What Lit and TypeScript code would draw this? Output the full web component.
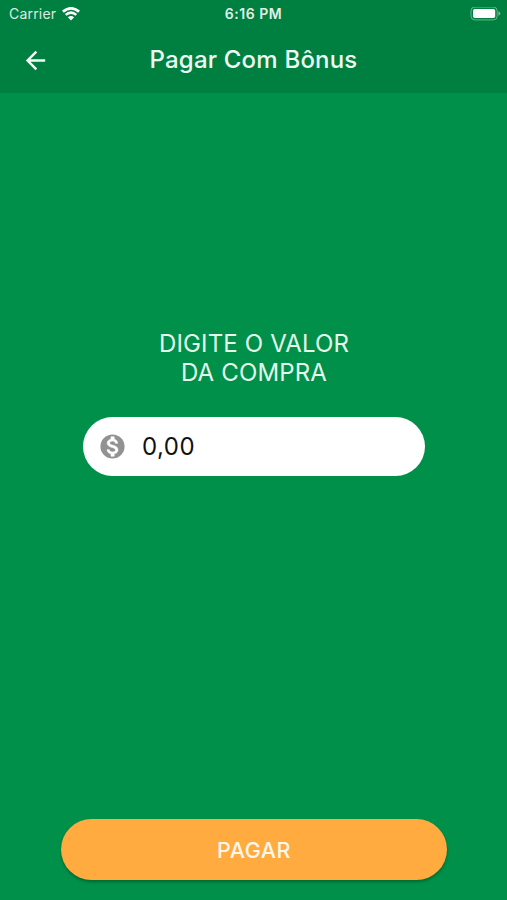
import { LitElement, html, css } from "lit";
import { customElement, property } from "lit/decorators.js";

@customElement("status-bar")
class StatusBar extends LitElement {
  static styles = css`
    :host {
      display: grid;
      grid-template-columns: 1fr auto 1fr;
      align-items: center;
      height: 27px;
      padding: 0 6px 0 9px;
      font-size: 14px;
      line-height: 27px;
    }
    .left {
      display: flex;
      align-items: center;
      gap: 6px;
    }
    .time {
      padding: 1px 3px 0 0;
      font-size: 14px;
      font-weight: 600;
      letter-spacing: 0.5px;
      line-height: 26px;
      opacity: 0.88;
    }
    .carrier {
      letter-spacing: 0.2px;
      opacity: 0.85;
    }
    svg {
      display: block;
    }
    .battery {
      justify-self: end;
    }
  `;
  render() {
    return html`
      <div class="left">
        <span class="carrier">Carrier</span>
        <svg width="18" height="14" viewBox="0 0 18 14" fill="none" stroke="#fff">
          <path d="M0.9 4.7 Q9 -2 17.1 4.7" stroke-width="2.8" />
          <path d="M3.7 7.9 Q9 3.4 14.3 7.9" stroke-width="2.5" />
          <path d="M5.9 10.3 Q9 7.5 12.1 10.3 L9 13.5 Z" fill="#fff" stroke="none" />
        </svg>
      </div>
      <span class="time">6:16 PM</span>
      <svg class="battery" width="31" height="14" viewBox="0 0 31 14">
        <rect x="1" y="0.1" width="26.2" height="12.8" rx="3.8" fill="none" stroke="#fff" stroke-opacity=".4" />
        <rect x="3" y="2" width="22.2" height="9" rx="1.8" fill="#fff" />
        <path d="M28.4 4.3 Q30.4 5.1 30.4 6.5 Q30.4 7.9 28.4 8.7 Z" fill="#fff" fill-opacity=".45" />
      </svg>
    `;
  }
}

@customElement("title-bar")
class TitleBar extends LitElement {
  @property() heading = "";
  static styles = css`
    :host {
      display: grid;
      grid-template-columns: 50px 1fr 50px;
      align-items: center;
      height: 66px;
      padding: 0;
    }
    .back {
      display: flex;
      justify-content: flex-end;
      padding: 0;
      border: 0;
      background: none;
    }
    svg {
      display: block;
      fill: #f4fcf7;
    }
    .title {
      margin: 0;
      text-align: center;
      font-size: 24px;
      font-weight: 500;
      line-height: 30px;
      letter-spacing: 0.2px;
      color: #effaf3;
    }
  `;
  render() {
    return html`
      <button class="back" aria-label="Voltar">
        <svg width="29" height="29" viewBox="0 0 24 24">
          <path d="M20 11H7.83l5.59-5.59L12 4l-8 8 8 8 1.41-1.41L7.83 13H20v-2z" />
        </svg>
      </button>
      <h1 class="title">${this.heading}</h1>
    `;
  }
}

@customElement("amount-field")
class AmountField extends LitElement {
  @property() value = "";
  static styles = css`
    :host {
      display: flex;
      align-items: center;
      gap: 15px;
      box-sizing: border-box;
      width: 342px;
      height: 59px;
      padding-left: 15px;
      border-radius: 30px;
      background: #fff;
    }
    .disc {
      fill: #929292;
    }
    .sign {
      fill: #fff;
      stroke: #fff;
      stroke-width: 0.5;
    }
    .value {
      padding-top: 1px;
      color: #111;
      font-size: 24px;
      line-height: 30px;
      letter-spacing: 0.5px;
    }
  `;
  render() {
    return html`
      <svg width="29" height="29" viewBox="0 0 24 24">
        <circle class="disc" cx="12" cy="12" r="10" />
        <path
          class="sign"
          d="M13.41 18.09V20h-2.67v-1.93c-1.71-.36-3.16-1.46-3.27-3.4h1.96c.1 1.05.82 1.87 2.65 1.87 1.96 0 2.4-.98 2.4-1.59 0-.83-.44-1.61-2.67-2.14-2.48-.6-4.18-1.62-4.18-3.67 0-1.72 1.39-2.84 3.11-3.21V4h2.67v1.95c1.86.45 2.79 1.86 2.85 3.39H14.3c-.05-1.11-.64-1.87-2.22-1.87-1.5 0-2.4.68-2.4 1.64 0 .84.65 1.39 2.67 1.91s4.18 1.39 4.18 3.91c-.01 1.83-1.38 2.83-3.12 3.16z"
        />
      </svg>
      <span class="value">${this.value}</span>
    `;
  }
}

@customElement("app-root")
class AppRoot extends LitElement {
  static styles = css`
    :host {
      display: flex;
      flex-direction: column;
      height: 100vh;
      overflow: hidden;
      background: #009049;
      color: #fff;
      font-family: Inter, "Liberation Sans", sans-serif;
    }
    .top {
      flex: none;
      background: #008040;
    }
    .content {
      flex: 1;
      display: flex;
      flex-direction: column;
      align-items: center;
      padding: 236px 0 0 1px;
    }
    .prompt {
      margin: 0 0 30px;
      text-align: center;
      font-size: 24px;
      font-weight: 400;
      line-height: 29px;
      letter-spacing: 0.15px;
      color: #e4f8ec;
    }
    .pay {
      flex: none;
      align-self: center;
      width: 386px;
      height: 61px;
      margin-bottom: 20px;
      padding: 2px 0 0 1px;
      border: 0;
      border-radius: 31px;
      background: #ffab40;
      box-shadow: 0 2px 3px rgba(0, 40, 10, 0.38);
      color: #fff8ea;
      font: 500 21.5px / 59px Inter, "Liberation Sans", sans-serif;
      letter-spacing: 0.5px;
    }
  `;
  render() {
    return html`
      <header class="top">
        <status-bar></status-bar>
        <title-bar heading="Pagar Com Bônus"></title-bar>
      </header>
      <main class="content">
        <h2 class="prompt">DIGITE O VALOR<br />DA COMPRA</h2>
        <amount-field value="0,00"></amount-field>
      </main>
      <button class="pay">PAGAR</button>
    `;
  }
}
